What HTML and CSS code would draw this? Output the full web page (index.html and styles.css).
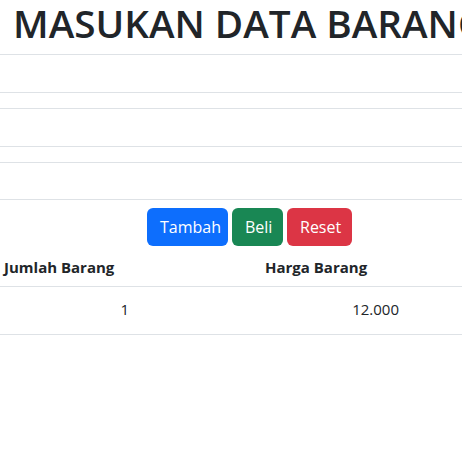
FILE: index.html
```html
<!DOCTYPE html>
<html lang="id">
<head>
<meta charset="utf-8">
<title>Masukan Data Barang</title>
<link rel="stylesheet" href="styles.css">
</head>
<body>
<header class="page-head">
  <h1 class="title">MASUKAN DATA BARANG</h1>
</header>
<form class="form">
  <div class="field field-first"></div>
  <div class="field"></div>
  <div class="field field-last"></div>
  <div class="actions">
    <button type="button" class="btn btn-primary">Tambah</button>
    <button type="button" class="btn btn-success">Beli</button>
    <button type="button" class="btn btn-danger">Reset</button>
  </div>
</form>
<div class="table">
  <div class="row head">
    <div class="cell left">Jumlah Barang</div>
    <div class="cell"></div>
    <div class="cell left">Harga Barang</div>
    <div class="cell"></div>
  </div>
  <div class="row body">
    <div class="cell right">1</div>
    <div class="cell"></div>
    <div class="cell right">12.000</div>
    <div class="cell"></div>
  </div>
</div>
</body>
</html>
```
FILE: styles.css
```css
html, body {
  margin: 0;
  padding: 0;
  background: #fff;
  color: #212529;
  font-family: "Open Sans", "Noto Sans", sans-serif;
  overflow: hidden;
}
.page-head {
  height: 54px;
  border-bottom: 1px solid #dee2e6;
  overflow: hidden;
}
.title {
  margin: 0;
  padding: 0 0 0 13px;
  font-size: 38.7px;
  font-weight: 600;
  line-height: 47px;
  white-space: nowrap;
}
.form {
  margin: 0;
}
.field {
  height: 37px;
  border-top: 1px solid #dee2e6;
  border-bottom: 1px solid #dee2e6;
  margin-bottom: 15px;
}
.field-first {
  border-top: none;
}
.field-last {
  height: 36px;
  margin-bottom: 0;
}
.actions {
  display: flex;
  gap: 4px;
  padding: 8px 0 0 147px;
}
.btn {
  height: 38px;
  padding: 0 12px;
  border: 1px solid transparent;
  border-radius: 6px;
  color: #fff;
  font-family: inherit;
  font-size: 16px;
  line-height: 24px;
  cursor: pointer;
}
.btn-primary { background: #0d6efd; width: 81px; }
.btn-success { background: #198754; width: 51px; }
.btn-danger { background: #dc3545; width: 65px; }
.table {
  display: grid;
  grid-template-columns: 133px 128px 142px 1fr;
}
.row {
  display: contents;
}
.cell {
  border-bottom: 1px solid #dee2e6;
}
.head .cell {
  height: 40px;
  font-weight: 700;
  font-size: 15px;
  line-height: 42px;
}
.body .cell {
  height: 47px;
  font-size: 15px;
  line-height: 45px;
}
.left { padding-left: 4px; }
.right { text-align: right; padding-right: 4px; }
```
